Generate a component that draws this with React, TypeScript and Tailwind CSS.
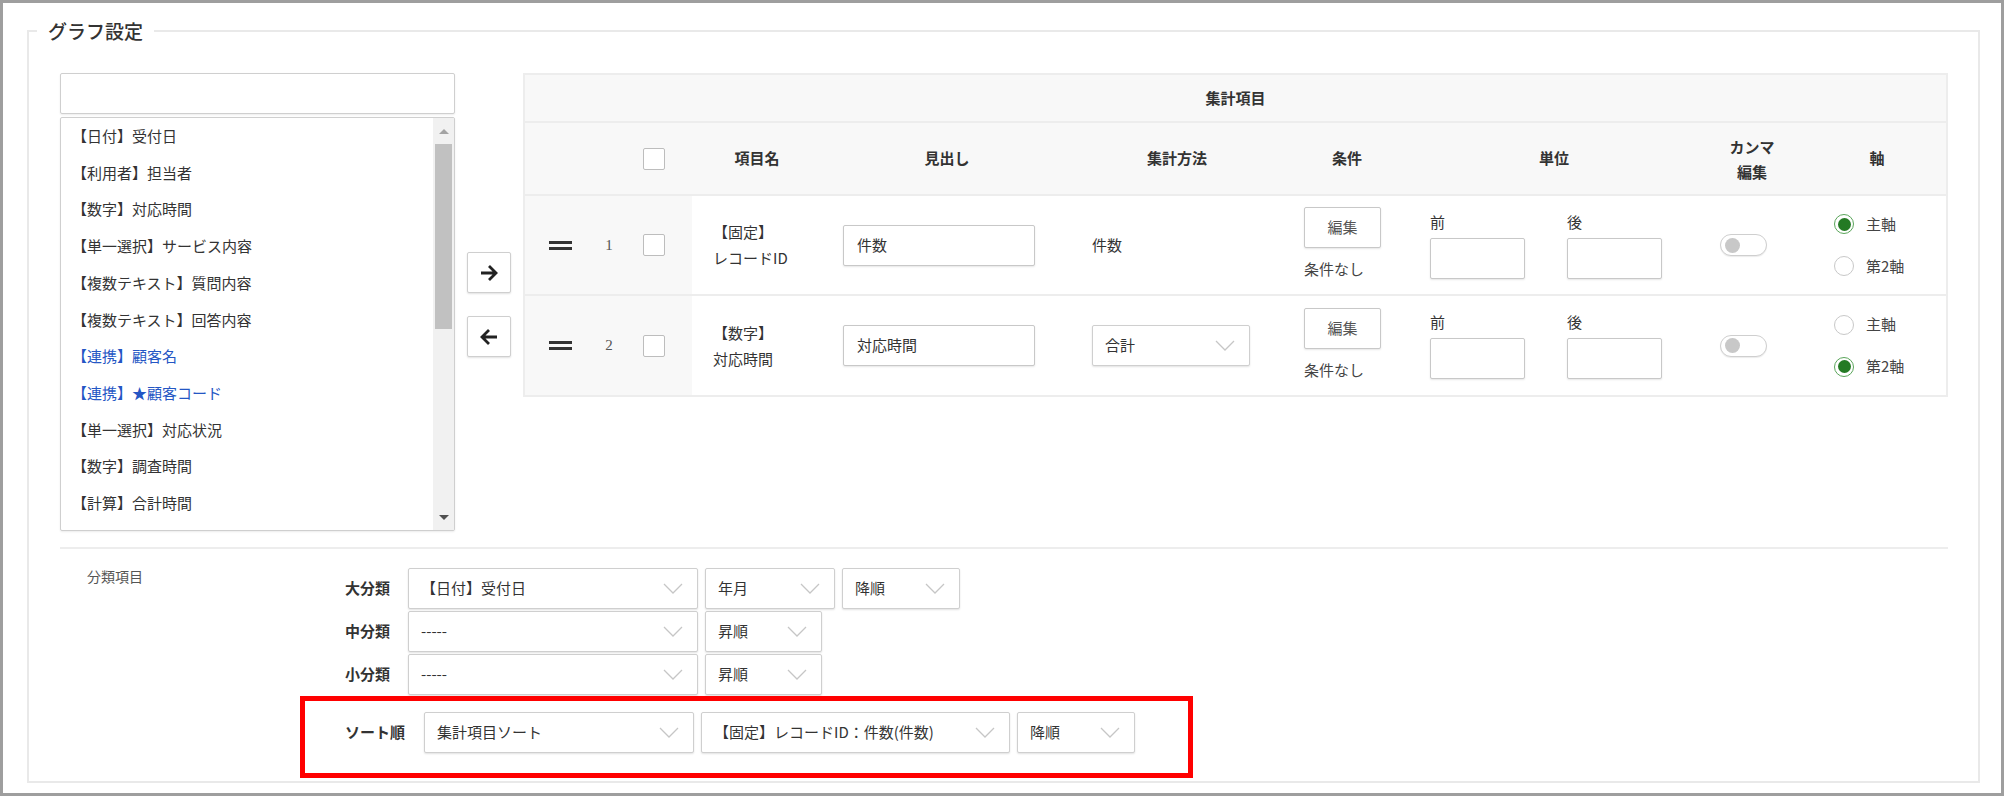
import React from "react";

const Chevron = () => (
  <svg width="20" height="11" viewBox="0 0 20 11" className="shrink-0">
    <polyline points="1,1 10,10 19,1" fill="none" stroke="#c6c6c6" strokeWidth="1.3" />
  </svg>
);

function Sel({ text, className }: { text: string; className: string }) {
  return (
    <div
      className={`flex h-[41px] items-center justify-between rounded-[2px] border border-[#cfcfcf] bg-white pl-[12px] pr-[14px] text-[15px] text-[#333] shadow-[0_1px_2px_rgba(0,0,0,0.12)] ${className}`}
    >
      <span className="whitespace-nowrap">{text}</span>
      <Chevron />
    </div>
  );
}

const ArrowIcon = ({ dir }: { dir: "r" | "l" }) => (
  <svg width="20" height="18" viewBox="0 0 20 18">
    {dir === "r" ? (
      <path d="M2 9H17M10 2l7 7-7 7" stroke="#222" strokeWidth="2.8" fill="none" />
    ) : (
      <path d="M18 9H3M10 2L3 9l7 7" stroke="#222" strokeWidth="2.8" fill="none" />
    )}
  </svg>
);

const Checkbox = () => (
  <span className="block h-[22px] w-[22px] rounded-[2px] border border-[#bdbdbd] bg-white" />
);

const Handle = () => (
  <span className="flex w-[23px] flex-col gap-[3px]">
    <span className="block h-[3px] w-full bg-[#333]" />
    <span className="block h-[3px] w-full bg-[#333]" />
  </span>
);

const Radio = ({ on, label }: { on: boolean; label: string }) => (
  <div className="flex h-[22px] items-center gap-[12px]">
    {on ? (
      <span className="flex h-[20px] w-[20px] items-center justify-center rounded-full border-[1.5px] border-[#5aa55a] bg-white">
        <span className="block h-[13px] w-[13px] rounded-full bg-[#247a24]" />
      </span>
    ) : (
      <span className="block h-[20px] w-[20px] rounded-full border-[1.5px] border-[#c8c8c8] bg-white" />
    )}
    <span className="text-[15px] text-[#444]">{label}</span>
  </div>
);

const Toggle = () => (
  <span className="flex h-[22px] w-[47px] items-center rounded-full border border-[#cfcfcf] bg-white shadow-[0_1px_1px_rgba(0,0,0,0.08)]">
    <span className="ml-[4px] block h-[15px] w-[15px] rounded-full bg-[#c8c8c8]" />
  </span>
);

const Input = ({ value, className }: { value?: string; className: string }) => (
  <div
    className={`flex h-[41px] items-center rounded-[2px] border border-[#c8c8c8] bg-white pl-[13px] text-[15px] text-[#333] shadow-[0_1px_2px_rgba(0,0,0,0.1)] ${className}`}
  >
    {value}
  </div>
);

const items: { t: string; blue?: boolean }[] = [
  { t: "【日付】受付日" },
  { t: "【利用者】担当者" },
  { t: "【数字】対応時間" },
  { t: "【単一選択】サービス内容" },
  { t: "【複数テキスト】質問内容" },
  { t: "【複数テキスト】回答内容" },
  { t: "【連携】顧客名", blue: true },
  { t: "【連携】★顧客コード", blue: true },
  { t: "【単一選択】対応状況" },
  { t: "【数字】調査時間" },
  { t: "【計算】合計時間" },
];

function Row({
  n,
  cat,
  name,
  heading,
  method,
  axisMain,
  h,
  border,
  btnPt,
}: {
  n: string;
  cat: string;
  name: string;
  heading: string;
  method: "text" | "select";
  axisMain: boolean;
  h: string;
  border: boolean;
  btnPt: string;
}) {
  return (
    <div
      className={`grid grid-cols-[65px_38px_64px_130px_250px_210px_130px_284px_112px_138px] ${h} ${
        border ? "border-b-2 border-[#ededed]" : ""
      }`}
    >
      <div className="flex items-center bg-[#f8f8f8] pl-[24px]">
        <Handle />
      </div>
      <div className="flex items-center justify-center bg-[#f8f8f8] font-['Liberation_Serif',serif] text-[15px] text-[#555]">
        {n}
      </div>
      <div className="flex items-center bg-[#f8f8f8] pl-[15px]">
        <Checkbox />
      </div>
      <div className="flex flex-col justify-center pl-[21px] text-[15px] leading-[26px] text-[#333]">
        <span>{cat}</span>
        <span>{name}</span>
      </div>
      <div className="flex items-center pl-[21px]">
        <Input value={heading} className="w-[192px]" />
      </div>
      <div className="flex items-center pl-[20px] text-[15px] text-[#333]">
        {method === "text" ? <span>件数</span> : <Sel text="合計" className="w-[158px]" />}
      </div>
      <div className={`flex flex-col items-start pl-[22px] ${btnPt}`}>
        <div className="flex h-[41px] w-[77px] items-center justify-center rounded-[2px] border border-[#c8c8c8] bg-white text-[15px] text-[#555] shadow-[0_1px_2px_rgba(0,0,0,0.1)]">
          編集
        </div>
        <span className="mt-[11px] text-[15px] leading-[20px] text-[#444]">条件なし</span>
      </div>
      <div className="flex gap-[42px] pl-[18px] pt-[16px]">
        <div className="flex flex-col">
          <span className="text-[15px] leading-[20px] text-[#333]">前</span>
          <Input className="mt-[6px] w-[95px]" />
        </div>
        <div className="flex flex-col">
          <span className="text-[15px] leading-[20px] text-[#333]">後</span>
          <Input className="mt-[6px] w-[95px]" />
        </div>
      </div>
      <div className="flex items-center pl-[24px]">
        <Toggle />
      </div>
      <div className="flex flex-col justify-center gap-[20px] pl-[26px]">
        <Radio on={axisMain} label="主軸" />
        <Radio on={!axisMain} label="第2軸" />
      </div>
    </div>
  );
}

export default function App() {
  return (
    <div className="h-[796px] w-[2004px] overflow-hidden border-[3px] border-[#9e9e9e] bg-white font-['Noto_Sans_CJK_JP','Noto_Sans',sans-serif] text-[#333]">
      <fieldset className="ml-[24px] mr-[21px] mt-[15px] border-2 border-[#e9e9e9] pb-[3px]">
        <legend className="ml-[8px] px-[11px] text-[19px] font-medium leading-[26px] text-[#333]">
          グラフ設定
        </legend>

        <div className="pl-[31px] pr-[28px] pt-[29px]">
          {/* top area */}
          <div className="flex items-start">
            <div className="flex w-[395px] flex-col gap-[3px]">
              <div className="h-[41px] rounded-[2px] border border-[#cfcfcf] bg-white shadow-[0_1px_2px_rgba(0,0,0,0.08)]" />
              <div className="flex h-[414px] overflow-hidden rounded-[2px] border border-[#cfcfcf] bg-white shadow-[0_1px_2px_rgba(0,0,0,0.08)]">
                <div className="flex flex-1 flex-col">
                  {items.map((it) => (
                    <div
                      key={it.t}
                      className={`flex h-[36.7px] shrink-0 items-center pl-[11px] text-[15px] ${
                        it.blue ? "text-[#2456c4]" : "text-[#333]"
                      }`}
                    >
                      {it.t}
                    </div>
                  ))}
                </div>
                <div className="flex w-[21px] flex-col bg-[#f1f1f1]">
                  <div className="flex h-[26px] shrink-0 items-center justify-center">
                    <span className="block h-0 w-0 border-x-[5px] border-b-[5px] border-x-transparent border-b-[#a3a3a3]" />
                  </div>
                  <div className="mx-[2px] h-[185px] shrink-0 bg-[#c1c1c1]" />
                  <div className="flex-1" />
                  <div className="flex h-[26px] shrink-0 items-center justify-center">
                    <span className="block h-0 w-0 border-x-[5px] border-t-[5px] border-x-transparent border-t-[#505050]" />
                  </div>
                </div>
              </div>
            </div>

            <div className="ml-[12px] flex flex-col gap-[23px] pt-[179px]">
              <div className="flex h-[41px] w-[44px] items-center justify-center rounded-[2px] border border-[#cfcfcf] bg-white shadow-[0_1px_2px_rgba(0,0,0,0.12)]">
                <ArrowIcon dir="r" />
              </div>
              <div className="flex h-[41px] w-[44px] items-center justify-center rounded-[2px] border border-[#cfcfcf] bg-white shadow-[0_1px_2px_rgba(0,0,0,0.12)]">
                <ArrowIcon dir="l" />
              </div>
            </div>

            <div className="ml-[12px] w-[1425px] border-2 border-[#ededed]">
              <div className="flex h-[48px] items-center justify-center border-b-2 border-[#ededed] bg-[#f8f8f8] text-[15px] font-bold text-[#333]">
                集計項目
              </div>
              <div className="grid h-[73px] grid-cols-[65px_38px_64px_130px_250px_210px_130px_284px_112px_138px] border-b-2 border-[#ededed] bg-[#f8f8f8] text-[15px] font-bold text-[#333]">
                <div />
                <div />
                <div className="flex items-center pl-[15px]">
                  <Checkbox />
                </div>
                <div className="flex items-center justify-center">項目名</div>
                <div className="flex items-center justify-center">見出し</div>
                <div className="flex items-center justify-center">集計方法</div>
                <div className="flex items-center justify-center">条件</div>
                <div className="flex items-center justify-center">単位</div>
                <div className="flex flex-col items-center justify-center leading-[25px]">
                  <span>カンマ</span>
                  <span>編集</span>
                </div>
                <div className="flex items-center justify-center">軸</div>
              </div>
              <Row
                n="1"
                cat="【固定】"
                name="レコードID"
                heading="件数"
                method="text"
                axisMain={true}
                h="h-[100px]"
                border={true}
                btnPt="pt-[11px]"
              />
              <Row
                n="2"
                cat="【数字】"
                name="対応時間"
                heading="対応時間"
                method="select"
                axisMain={false}
                h="h-[99px]"
                border={false}
                btnPt="pt-[12px]"
              />
            </div>
          </div>

          {/* divider */}
          <div className="mt-[16px] h-[2px] w-[1888px] bg-[#ededed]" />

          {/* bottom area */}
          <div className="flex">
            <div className="w-[240px] shrink-0 pl-[27px] pt-[17px] text-[14px] leading-[20px] text-[#555]">
              分類項目
            </div>
            <div className="flex flex-col">
              <div className="flex flex-col gap-[2px] pl-[45px] pt-[19px]">
                <div className="flex items-center">
                  <span className="w-[63px] shrink-0 text-[15px] font-bold text-[#333]">大分類</span>
                  <div className="flex gap-[7px]">
                    <Sel text="【日付】受付日" className="w-[290px]" />
                    <Sel text="年月" className="w-[130px]" />
                    <Sel text="降順" className="w-[118px]" />
                  </div>
                </div>
                <div className="flex items-center">
                  <span className="w-[63px] shrink-0 text-[15px] font-bold text-[#333]">中分類</span>
                  <div className="flex gap-[7px]">
                    <Sel text="-----" className="w-[290px]" />
                    <Sel text="昇順" className="w-[117px]" />
                  </div>
                </div>
                <div className="flex items-center">
                  <span className="w-[63px] shrink-0 text-[15px] font-bold text-[#333]">小分類</span>
                  <div className="flex gap-[7px]">
                    <Sel text="-----" className="w-[290px]" />
                    <Sel text="昇順" className="w-[117px]" />
                  </div>
                </div>
              </div>
              <div className="mt-[1px] w-[893px] border-[5px] border-[#ff0000] pb-[20px] pl-[40px] pt-[11px]">
                <div className="flex items-center">
                  <span className="w-[79px] shrink-0 text-[15px] font-bold text-[#333]">ソート順</span>
                  <div className="flex gap-[7px]">
                    <Sel text="集計項目ソート" className="w-[270px]" />
                    <Sel text="【固定】レコードID：件数(件数)" className="w-[309px]" />
                    <Sel text="降順" className="w-[118px]" />
                  </div>
                </div>
              </div>
            </div>
          </div>
        </div>
      </fieldset>
    </div>
  );
}
